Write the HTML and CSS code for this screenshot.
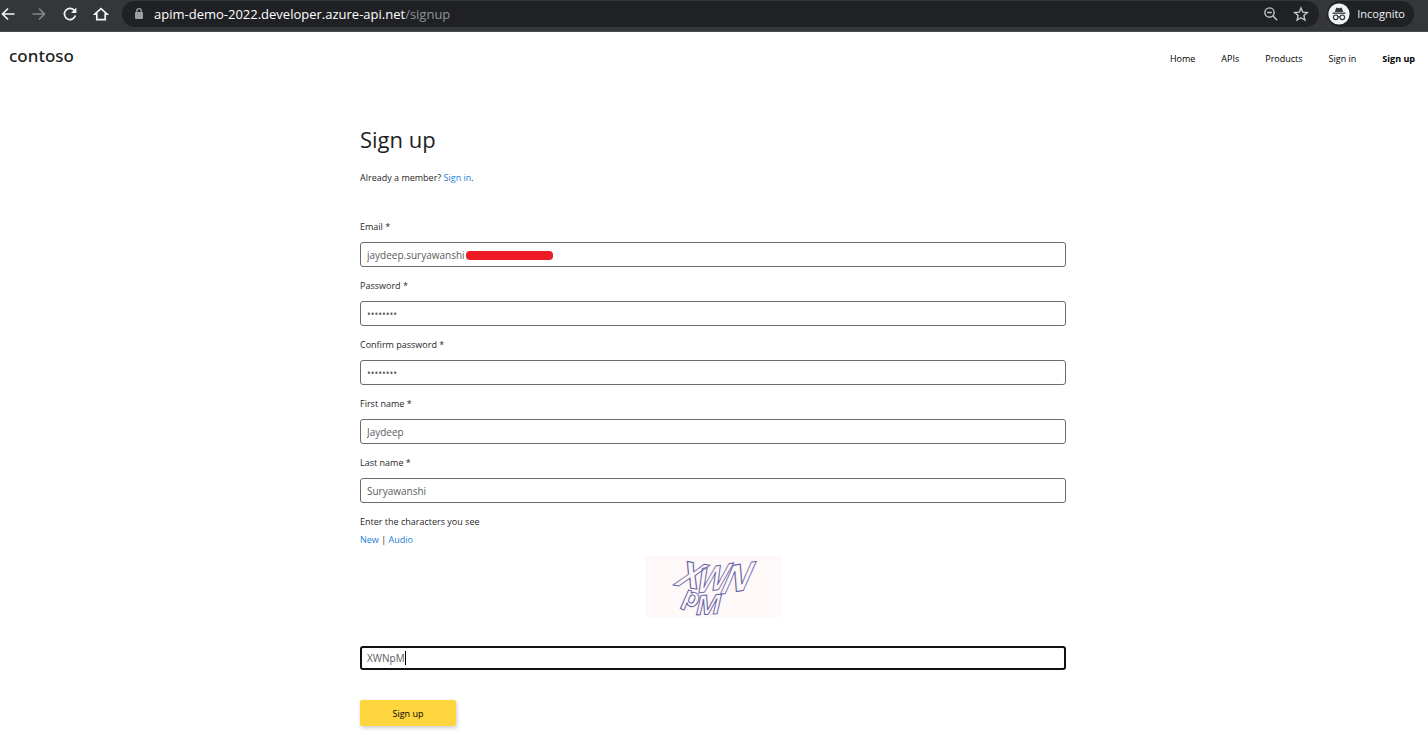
FILE: index.html
```html
<!DOCTYPE html>
<html lang="en">
<head>
    <meta charset="UTF-8">
    <meta name="viewport" content="width=device-width, initial-scale=1.0">
    <title>Sign up</title>
    <link rel="stylesheet" href="styles.css">
</head>
<body>
    <div class="browser-bar">
        <div class="browser-nav">
            <button type="button" class="icon-btn" aria-label="Back">
                <svg width="16" height="16" viewBox="0 0 16 16"><path d="M14.5 8H2.5M8 2.5L2.5 8L8 13.5" /></svg>
            </button>
            <button type="button" class="icon-btn disabled" aria-label="Forward" disabled>
                <svg width="16" height="16" viewBox="0 0 16 16"><path d="M1.5 8H13.5M8 2.5L13.5 8L8 13.5" /></svg>
            </button>
            <button type="button" class="icon-btn" aria-label="Reload">
                <svg width="16" height="16" viewBox="0 0 16 16"><path d="M13.4 9.6A5.6 5.6 0 1 1 12.2 4.2L13.5 5.6" /><path class="solid" d="M14.4 1.6V7H9z" /></svg>
            </button>
            <button type="button" class="icon-btn" aria-label="Home">
                <svg width="16" height="16" viewBox="0 0 16 16"><path d="M1.8 8.2L8 2.6L14.2 8.2H12.2V13.6H3.8V8.2z" /></svg>
            </button>
        </div>
        <div class="address">
            <svg class="lock" width="10" height="14" viewBox="0 0 10 14"><rect x="1" y="5" width="8" height="7" rx="1" fill="#9aa0a6" /><path d="M2.8 5.5V3.8a2.2 2.2 0 0 1 4.4 0V5.5" fill="none" stroke="#9aa0a6" stroke-width="1.3" /></svg>
            <div class="url">apim-demo-2022.developer.azure-api.net<span>/signup</span></div>
            <button type="button" class="icon-btn light" aria-label="Zoom">
                <svg width="16" height="16" viewBox="0 0 16 16"><circle cx="6.5" cy="6.5" r="4.6" /><path d="M4.2 6.5H8.8M10 10L14.2 14.2" /></svg>
            </button>
            <button type="button" class="icon-btn light" aria-label="Bookmark this page">
                <svg width="16" height="16" viewBox="0 0 16 16"><path d="M8 2L9.8 6.2L14.3 6.6L10.9 9.6L11.9 14L8 11.7L4.1 14L5.1 9.6L1.7 6.6L6.2 6.2z" /></svg>
            </button>
        </div>
        <div class="incognito">
            <svg width="22" height="22" viewBox="0 0 22 22">
                <circle cx="11" cy="11" r="10.6" fill="#f1f3f4" />
                <path d="M6.8 9L8 5.2Q8.3 4.4 9.1 4.7L11 5.2L12.9 4.7Q13.7 4.4 14 5.2L15.2 9z" fill="#35363a" />
                <path d="M4.5 10.2H17.5" stroke="#35363a" stroke-width="1.3" />
                <g fill="none" stroke="#35363a" stroke-width="1.2"><circle cx="7.7" cy="14.3" r="2.3" /><circle cx="14.3" cy="14.3" r="2.3" /><path d="M10 14.1Q11 13.3 12 14.1" /></g>
            </svg>
            <span>Incognito</span>
        </div>
    </div>

    <header class="site-header">
        <a class="logo" href="#">contoso</a>
        <nav class="menu">
            <a href="#">Home</a>
            <a href="#">APIs</a>
            <a href="#">Products</a>
            <a href="#">Sign in</a>
            <a href="#" class="active">Sign up</a>
        </nav>
    </header>

    <main class="container">
        <h1>Sign up</h1>
        <p class="member">Already a member? <a href="#">Sign in</a>.</p>

        <form class="signup-form">
            <div class="form-group">
                <label for="email">Email *</label>
                <div class="control">
                    <input type="text" id="email" value="jaydeep.suryawanshi">
                    <span class="redacted"></span>
                </div>
            </div>
            <div class="form-group">
                <label for="password">Password *</label>
                <input type="password" id="password" value="password">
            </div>
            <div class="form-group">
                <label for="confirm">Confirm password *</label>
                <input type="password" id="confirm" value="password">
            </div>
            <div class="form-group">
                <label for="first-name">First name *</label>
                <input type="text" id="first-name" value="Jaydeep">
            </div>
            <div class="form-group">
                <label for="last-name">Last name *</label>
                <input type="text" id="last-name" value="Suryawanshi">
            </div>

            <div class="captcha">
                <label for="captcha">Enter the characters you see</label>
                <div class="captcha-links"><a href="#">New</a> | <a href="#">Audio</a></div>
                <svg class="captcha-image" width="137" height="61" viewBox="0 0 137 61">
                    <rect width="137" height="61" fill="#fef8f8" />
                    <g class="captcha-text">
                        <text transform="translate(28 29) rotate(10) skewX(-20)" font-size="36">X</text>
                        <text transform="translate(48 38) rotate(-10) skewX(-30)" font-size="33">W</text>
                        <text transform="translate(72 39) rotate(-10) skewX(-34)" font-size="37">N</text>
                        <text transform="translate(36 46) rotate(24)" font-size="26">p</text>
                        <text transform="translate(49 59) rotate(-3) skewX(-16)" font-size="27">M</text>
                    </g>
                </svg>
                <div class="control">
                    <input type="text" id="captcha" class="focused" value="XWNpM">
                    <span class="caret"></span>
                </div>
            </div>

            <button type="submit" class="submit-btn">Sign up</button>
        </form>
    </main>
</body>
</html>
```
FILE: styles.css
```css
* {
    box-sizing: border-box;
}
body {
    margin: 0;
    font-family: 'Open Sans', sans-serif;
    font-size: 9px;
    line-height: 14px;
    color: #1f1f1f;
    background-color: #fff;
}
a {
    color: #1a7fd6;
    text-decoration: none;
}

/* browser bar */
.browser-bar {
    display: flex;
    align-items: center;
    height: 32px;
    padding: 0 14px 4px 0;
    background-color: #35363a;
    border-bottom: 1px solid #4a4b4f;
}
.browser-nav {
    display: flex;
    gap: 15px;
    margin-right: 13px;
}
.icon-btn {
    width: 16px;
    height: 16px;
    padding: 0;
    border: none;
    background: none;
}
.icon-btn svg {
    display: block;
    fill: none;
    stroke: #f1f3f4;
    stroke-width: 1.7;
}
.icon-btn .solid {
    fill: #f1f3f4;
    stroke: none;
}
.icon-btn.disabled svg {
    stroke: #85868a;
}
.icon-btn.light svg {
    stroke: #c4c7ca;
    stroke-width: 1.4;
}
.address {
    flex: 1;
    display: flex;
    align-items: center;
    gap: 14px;
    height: 26px;
    padding: 0 10px 0 12px;
    border-radius: 13px;
    background-color: #202124;
}
.url {
    flex: 1;
    margin-left: -4px;
    font-size: 13px;
    color: #fff;
}
.url span {
    color: #8f9398;
}
.incognito {
    display: flex;
    align-items: center;
    gap: 7px;
    height: 26px;
    margin-left: 8px;
    padding: 0 9px 0 1px;
    border-radius: 13px;
    background-color: #202124;
    font-size: 11px;
    color: #f1f3f4;
}

/* site header */
.site-header {
    display: flex;
    justify-content: space-between;
    padding: 16px 13px 0 9px;
}
.logo {
    font-family: 'Noto Sans', 'Open Sans', sans-serif;
    font-size: 17px;
    line-height: 16px;
    font-weight: 500;
    color: #1f1f1f;
}
.menu {
    display: flex;
    gap: 26px;
    padding-top: 4px;
}
.menu a {
    color: #000;
}
.menu .active {
    font-weight: bold;
}

/* sign up form */
.container {
    max-width: 708px;
    margin: 0 auto;
    padding: 57px 2px 9px 0;
}
h1 {
    margin: 0;
    font-size: 22px;
    line-height: 32px;
    font-weight: 400;
}
.member {
    margin: 16px 0 35px;
}
.form-group {
    margin-bottom: 12px;
}
label {
    display: block;
    margin-bottom: 8px;
}
input {
    display: block;
    width: 100%;
    height: 25px;
    padding: 0 6px;
    border: 1px solid #6b6b6b;
    border-radius: 3px;
    font-family: inherit;
    font-size: 10px;
    color: #5c5c5c;
    background-color: #fff;
}
input.focused {
    height: 24px;
    padding: 0 5px;
    border: 2px solid #111;
    outline: none;
}
.control {
    position: relative;
}
.redacted {
    position: absolute;
    left: 106px;
    top: 9px;
    width: 87px;
    height: 9px;
    border-radius: 4px;
    background-color: #ed1c24;
}
.captcha label {
    margin-bottom: 4px;
}
.captcha-image {
    display: block;
    margin: 9px auto 29px;
}
.captcha-text {
    font-family: 'Open Sans', sans-serif;
    font-weight: bold;
    fill: none;
    stroke: #6564a6;
    stroke-width: 1;
}
.caret {
    position: absolute;
    left: 45px;
    top: 5px;
    width: 1px;
    height: 14px;
    background-color: #000;
}
.submit-btn {
    display: block;
    width: 96px;
    height: 26px;
    margin-top: 30px;
    padding: 0;
    border: none;
    border-radius: 2px;
    background-color: #ffd53d;
    box-shadow: 1px 2px 4px rgba(0, 0, 0, 0.2);
    font-family: inherit;
    font-size: 9px;
    color: #000;
    cursor: pointer;
}
```
